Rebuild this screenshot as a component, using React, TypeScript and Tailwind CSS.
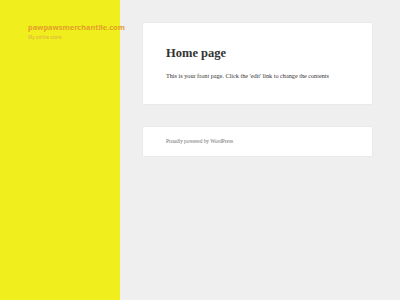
export default function App() {
  return (
    <div className="flex h-[300px] w-[400px] overflow-hidden bg-[#efefef]">
      {/* Sidebar */}
      <div className="relative z-10 w-[120px] shrink-0 bg-[#f0ef1d]">
        <div className="pl-[28px] pt-[22px] whitespace-nowrap">
          <p className="text-[7.4px] leading-[10px] font-bold text-[#e3a02a] [font-family:'Noto_Sans',sans-serif]">
            pawpawsmerchantile.com
          </p>
          <p className="mt-[2px] text-[4.6px] leading-[6px] text-[#dcad4a] [font-family:'Noto_Sans',sans-serif]">
            My online store
          </p>
        </div>
      </div>

      {/* Main */}
      <div className="flex flex-col gap-[23px] pl-[23px] pt-[23px]">
        <div className="h-[81px] w-[229px] bg-white pl-[23px] pt-[22px] shadow-[0_0_1px_rgba(0,0,0,0.15)]">
          <h1 className="text-[12.5px] leading-[16px] font-bold text-[#333] [font-family:'Liberation_Serif',serif]">
            Home page
          </h1>
          <p className="mt-[11px] text-[6.2px] leading-[8px] text-[#333] [font-family:'Liberation_Serif',serif] whitespace-nowrap">
            This is your front page. Click the 'edit' link to change the contents
          </p>
        </div>
        <div className="h-[29px] w-[229px] bg-white pl-[23px] pt-[11px] shadow-[0_0_1px_rgba(0,0,0,0.15)]">
          <p className="text-[5.3px] leading-[7px] text-[#707070] [font-family:'Liberation_Serif',serif] whitespace-nowrap">
            Proudly powered by WordPress
          </p>
        </div>
      </div>
    </div>
  );
}
